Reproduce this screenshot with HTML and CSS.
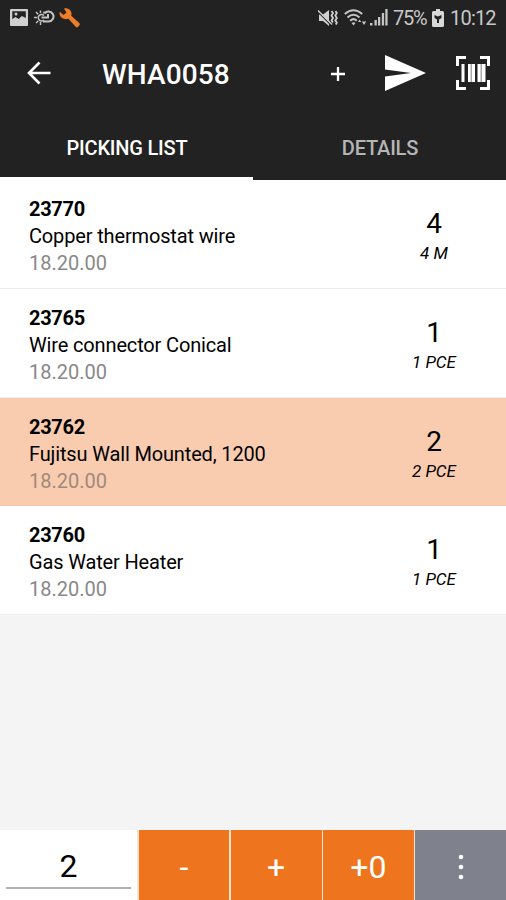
FILE: index.html
```html
<!DOCTYPE html>
<html lang="en">
<head>
    <meta charset="UTF-8">
    <meta name="viewport" content="width=device-width, initial-scale=1.0">
    <title>WHA0058</title>
    <link rel="stylesheet" href="styles.css">
</head>
<body>
    <div class="app">
        <header>
            <div class="status-bar">
                <svg class="icon-image" width="18" height="17" viewBox="0 0 18 17">
                    <path fill="#d0d0d0" fill-rule="evenodd" d="M1 0h16q1 0 1 1v15q0 1-1 1H1q-1 0-1-1V1q0-1 1-1zM2.300 2.300v8l3-2.300 3.500 2 3-3 4 2V2.300z"/>
                    <circle cx="6" cy="5" r="1.500" fill="#d0d0d0"/>
                </svg>
                <svg class="icon-weather" width="21" height="17" viewBox="0 0 21 17" fill="none" stroke="#c4c4c4" stroke-width="1.500">
                    <path d="M10 6.500a3.300 3.300 0 1 0 0 4.500M6.500 1.500v2.500M2 3l2.200 2.200M0 8.500h3M2 14l2.200-2M6.500 13v3M10.500 2.500L9.500 4.500"/>
                    <path stroke-width="2" d="M9 12.500h5.500a5 5 0 1 0-4-8M7.500 8.500H14V5"/>
                </svg>
                <svg class="icon-wrench" width="21" height="20" viewBox="0 0 21 20">
                    <path fill="#ef7c28" d="M5 .5C8.500-.5 12.500 2 12.500 5.500c0 .8 0 1.500-.3 2.200l8.300 7.500q.8 1 0 1.900l-1.600 2q-1 .8-2 0l-7.500-8.300C5.500 12 1.500 10 .6 6.500c-.2-1 0-2 .3-2.800L4.500 7l3-2.500z"/>
                </svg>
                <div class="status-right">
                    <svg width="20" height="18" viewBox="0 0 20 18">
                        <path fill="#cfcfcf" d="M1 5.500h4L11 1v16l-6-5H1z"/>
                        <path fill="none" stroke="#cfcfcf" stroke-width="1.800" d="M13.500 2l1.500 2-1.500 2.500 1.500 2.500-1.500 2.500 1.500 2M17.500 2l1.300 2-1.500 2.500 1.500 2.500-1.500 2.500 1.500 2-1 2"/>
                        <path stroke="#222" stroke-width="1.200" d="M0 3l13 13"/>
                        <path stroke="#cfcfcf" stroke-width="1.500" d="M0 1.500l14 14"/>
                    </svg>
                    <svg class="icon-wifi" width="23" height="18" viewBox="0 0 23 18" fill="none" stroke="#c4c4c4" stroke-width="2">
                        <path d="M.8 5Q9.500-2.500 18.200 5M3.500 8.500Q9.500 3 15.500 8.500M6.200 11.800Q9.500 8.500 12.800 11.800"/>
                        <path fill="#c4c4c4" stroke="none" d="M7.500 14q2-1.500 4 0l-2 2.500zM14 13l1.600-2.500 1.600 2.500zM17.800 12.500h4.400l-2.200 3.500z"/>
                    </svg>
                    <svg class="icon-signal" width="18" height="17" viewBox="0 0 18 17" fill="#c4c4c4">
                        <path d="M0 14h2.500v2.500H0zM4.500 11h2.300v5.500H4.500zM8 8h2.300v8.500H8zM11.800 4h2.300v12.500h-2.300zM15.300 0h2.300v16.500h-2.300z"/>
                    </svg>
                    <span class="battery-text">75%</span>
                    <svg class="icon-battery" width="12" height="18" viewBox="0 0 12 18">
                        <path fill="#d8d8d8" d="M4 0h4v2h2.500Q12 2 12 3.500v13q0 1.500-1.500 1.500h-9Q0 18 0 16.500v-13Q0 2 1.500 2H4z"/>
                        <path fill="#222" d="M2.500 6L6 7.500 9.500 6v3L7 10.500V14H5v-3.500L2.500 9z"/>
                    </svg>
                    <span class="clock">10:12</span>
                </div>
            </div>
            <div class="toolbar">
                <svg class="back" width="24" height="24" viewBox="0 0 24 24" fill="none" stroke="#fff" stroke-width="2.600">
                    <path d="M23.500 12H2.500M12.500 1.500L2 12l10.500 10.500"/>
                </svg>
                <h1>WHA0058</h1>
                <svg class="add" width="14" height="14" viewBox="0 0 14 14" stroke="#fff" stroke-width="2.300">
                    <path d="M7 0v14M0 7h14"/>
                </svg>
                <svg class="send" width="41" height="36" viewBox="0 0 41 36">
                    <path fill="#fff" d="M0 0l41 18L0 36V21.500L26 18 0 14.500z"/>
                </svg>
                <svg class="scan" width="34" height="34" viewBox="0 0 34 34">
                    <path fill="none" stroke="#fff" stroke-width="3" d="M10 1.500H1.500V10M24 1.500h8.500V10M10 32.500H1.500V24M24 32.500h8.500V24"/>
                    <path fill="#fff" d="M5.500 8h3v18h-3zM12 8h7v18h-7zM21.500 8h8v18h-8z"/>
                    <path fill="#aaa" d="M14.500 8H16v18h-1.500zM24.500 8H26v18h-1.500z"/>
                </svg>
            </div>
            <div class="tabs">
                <div class="tab active">PICKING LIST</div>
                <div class="tab">DETAILS</div>
            </div>
        </header>
        <main>
            <div class="item">
                <div class="info">
                    <div class="code">23770</div>
                    <div class="name">Copper thermostat wire</div>
                    <div class="place">18.20.00</div>
                </div>
                <div class="amount">
                    <div class="qty">4</div>
                    <div class="unit">4 M</div>
                </div>
            </div>
            <div class="item">
                <div class="info">
                    <div class="code">23765</div>
                    <div class="name">Wire connector Conical</div>
                    <div class="place">18.20.00</div>
                </div>
                <div class="amount">
                    <div class="qty">1</div>
                    <div class="unit">1 PCE</div>
                </div>
            </div>
            <div class="item selected">
                <div class="info">
                    <div class="code">23762</div>
                    <div class="name">Fujitsu Wall Mounted, 1200</div>
                    <div class="place">18.20.00</div>
                </div>
                <div class="amount">
                    <div class="qty">2</div>
                    <div class="unit">2 PCE</div>
                </div>
            </div>
            <div class="item">
                <div class="info">
                    <div class="code">23760</div>
                    <div class="name">Gas Water Heater</div>
                    <div class="place">18.20.00</div>
                </div>
                <div class="amount">
                    <div class="qty">1</div>
                    <div class="unit">1 PCE</div>
                </div>
            </div>
        </main>
        <footer>
            <div class="entry"><div class="value">2</div></div>
            <button type="button">-</button>
            <button type="button">+</button>
            <button type="button">+0</button>
            <button type="button" class="more">
                <svg width="6" height="26" viewBox="0 0 6 26" fill="#fff">
                    <circle cx="3" cy="3" r="2.300"/>
                    <circle cx="3" cy="13" r="2.300"/>
                    <circle cx="3" cy="23" r="2.300"/>
                </svg>
            </button>
        </footer>
    </div>
</body>
</html>
```
FILE: styles.css
```css
body {
    font-family: Roboto, sans-serif;
    background-color: #f4f4f4;
    margin: 0;
}
.app {
    display: flex;
    flex-direction: column;
    height: 900px;
    overflow: hidden;
}
header {
    background-color: #222;
    color: white;
    height: 180px;
}
svg {
    display: block;
    flex: none;
}
.status-bar {
    display: flex;
    align-items: center;
    height: 35px;
    padding: 0 10px;
    box-sizing: border-box;
}
.icon-weather {
    margin-left: 6px;
}
.icon-wrench {
    margin-left: 4px;
}
.status-right {
    display: flex;
    align-items: center;
    margin-left: auto;
    color: #c8c8c8;
    font-size: 20px;
}
.icon-wifi {
    margin-left: 6px;
}
.icon-signal {
    margin-left: 3px;
}
.battery-text {
    width: 33px;
    margin-left: 5px;
    letter-spacing: -1.3px;
}
.icon-battery {
    margin-left: 6px;
}
.clock {
    width: 46px;
    margin-left: 6px;
    letter-spacing: -0.8px;
}
.toolbar {
    display: flex;
    align-items: center;
    height: 76px;
    padding: 0 16px 0 27px;
}
h1 {
    font-size: 28px;
    font-weight: 500;
    line-height: 34px;
    margin: 3px auto 0 51px;
    letter-spacing: 0.1px;
}
.add {
    margin-top: 1px;
}
.send {
    margin-left: 40px;
}
.scan {
    margin-left: 30px;
}
.tabs {
    display: flex;
    height: 69px;
}
.tab {
    flex: 1;
    box-sizing: border-box;
    padding: 25px 0 0 1px;
    color: #b5b5b5;
    font-size: 20px;
    font-weight: 500;
    letter-spacing: -0.2px;
    line-height: 24px;
    text-align: center;
}
.tab.active {
    color: white;
    border-bottom: 3px solid white;
}
main {
    flex: 1;
}
.item {
    display: flex;
    justify-content: space-between;
    box-sizing: border-box;
    height: 108.75px;
    padding: 16px 22px 0 29px;
    background-color: white;
    border-bottom: 1px solid #eee;
}
.item.selected {
    background-color: #f9ccb0;
    border-bottom-color: #f3c5a8;
}
.info {
    font-size: 20px;
    line-height: 27px;
}
.code {
    font-weight: 700;
    letter-spacing: -0.3px;
}
.name {
    letter-spacing: -0.15px;
}
.place {
    color: #888;
}
.selected .place {
    color: #a08a7c;
}
.amount {
    width: 100px;
    padding-top: 11px;
    text-align: center;
}
.qty {
    font-size: 28px;
    line-height: 34px;
}
.unit {
    font-size: 17px;
    font-style: italic;
    line-height: 24px;
}
footer {
    display: flex;
    gap: 1.5px;
    height: 70px;
    background-color: #fbe3cd;
}
.entry {
    width: 137px;
    padding: 0 6px;
    box-sizing: border-box;
    background-color: white;
}
.value {
    height: 57px;
    border-bottom: 2px solid #b0b0b0;
    font-size: 32px;
    line-height: 72px;
    text-align: center;
}
button {
    flex: 1;
    display: flex;
    align-items: center;
    justify-content: center;
    padding: 3px 0 0;
    border: none;
    background-color: #ee751d;
    color: white;
    font-family: Roboto, sans-serif;
    font-size: 32px;
}
.more {
    background-color: #7f828d;
}
```
